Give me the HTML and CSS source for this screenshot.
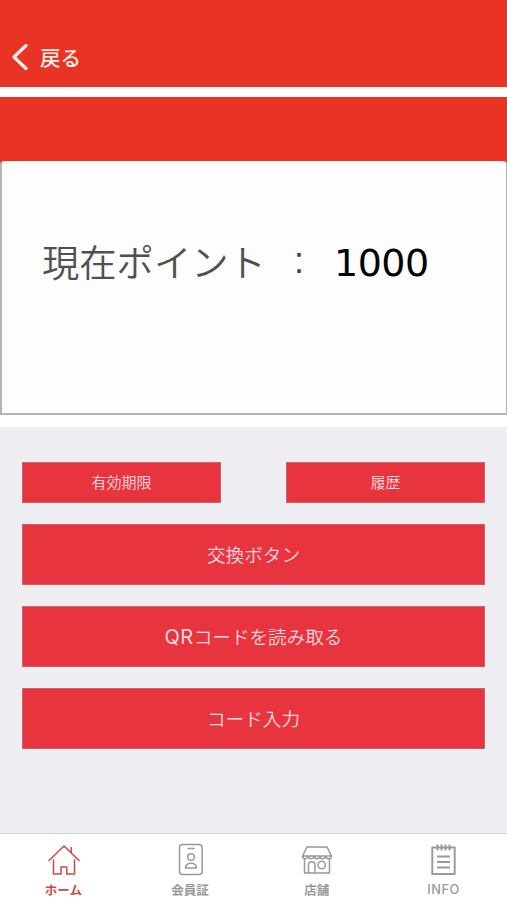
FILE: index.html
```html
<!DOCTYPE html>
<html lang="ja">
<head>
<meta charset="utf-8">
<title>ポイント</title>
<link rel="stylesheet" href="styles.css">
</head>
<body>
<div class="app">
  <header class="header">
    <a class="back">
      <svg class="back-icon" width="17" height="28" viewBox="0 0 17 28"><path d="M15 2.500 3 14 15 25.500"/></svg>
      <span>戻る</span>
    </a>
  </header>
  <section class="points">
    <div class="banner"></div>
    <div class="card">
      <span class="label">現在ポイント</span>
      <span class="colon">:</span>
      <span class="value">1000</span>
    </div>
  </section>
  <main class="actions">
    <div class="row">
      <button class="btn small">有効期限</button>
      <button class="btn small">履歴</button>
    </div>
    <button class="btn">交換ボタン</button>
    <button class="btn"><span class="qr">QR</span>コードを読み取る</button>
    <button class="btn">コード入力</button>
  </main>
  <nav class="tabs">
    <a class="tab active">
      <svg width="34" height="34" viewBox="0 0 34 34"><path d="M3 17.500 18 3l15 14.500M25.200 10V4.500M7.500 17v14H15v-7h5.800v7H28.500V17"/></svg>
      <span>ホーム</span>
    </a>
    <a class="tab">
      <svg width="34" height="34" viewBox="0 0 34 34"><rect x="6.500" y="1.500" width="22.600" height="30" rx="3"/><path d="M15 5.500h6M12.500 25c0-6.500 11-6.500 11 0z"/><circle cx="18" cy="14" r="3.300"/></svg>
      <span>会員証</span>
    </a>
    <a class="tab">
      <svg width="34" height="34" viewBox="0 0 34 34"><path d="M7 4h20l4.500 9H2.500zM2.500 13c0 3.500 5.800 3.500 5.800 0 0 3.500 5.800 3.500 5.800 0 0 3.500 5.800 3.500 5.800 0 0 3.500 5.800 3.500 5.800 0 0 3.500 5.800 3.500 5.800 0M4.500 16v14h25V16M8.500 30v-8c0-4.500 6.500-4.500 6.500 0v8"/><circle cx="21.700" cy="22" r="3.700"/></svg>
      <span>店舗</span>
    </a>
    <a class="tab">
      <svg width="34" height="34" viewBox="0 0 34 34"><path class="bold" d="M5.300 4.500h22.400v26.500H5.300zM10.500 1.500v6M14.500 1.500v6M18.500 1.500v6M22.500 1.500v6M10 13.500h13M10 19h13M10 24.500h13"/></svg>
      <span class="latin">INFO</span>
    </a>
  </nav>
</div>
</body>
</html>
```
FILE: styles.css
```css
* {
  box-sizing: border-box;
}

body {
  margin: 0;
  font-family: "Noto Sans CJK JP", sans-serif;
}

.app {
  height: 900px;
  display: flex;
  flex-direction: column;
  background: #fff;
  overflow: hidden;
}

.header {
  height: 87px;
  padding: 28px 0 2px 11px;
  background: #e93425;
  display: flex;
  align-items: center;
}

.back {
  display: flex;
  align-items: center;
  gap: 12px;
  color: #fff0e8;
  font-size: 20.500px;
  font-weight: 500;
  line-height: 28px;
}

.back-icon path {
  fill: none;
  stroke: #fff0e8;
  stroke-width: 3.200;
  stroke-linecap: round;
  stroke-linejoin: round;
}

.points {
  margin-top: 10px;
  background: linear-gradient(#e93425 67px, #fff 67px);
}

.banner {
  height: 64px;
}

.card {
  height: 254px;
  padding: 0 0 50px 40px;
  display: flex;
  align-items: center;
  background: #fdfdfd;
  border: solid #b4b4b6;
  border-width: 0 1px 2px 2px;
  border-radius: 4px 4px 0 0;
  line-height: 56px;
}

.label {
  width: 243px;
  font-size: 37.300px;
  font-weight: 350;
  color: #505050;
  margin-top: -2px;
}

.colon {
  width: 49px;
  padding-left: 9px;
  font-family: "Liberation Sans", sans-serif;
  font-size: 36px;
  margin-top: -3px;
  color: #444;
}

.value {
  font-family: "DejaVu Sans", sans-serif;
  font-size: 38px;
  letter-spacing: -0.500px;
  margin-top: 2px;
  color: #000;
}

.actions {
  flex: 1;
  margin-top: 12px;
  padding: 35px 22px 0;
  background: #eeedf2;
  display: flex;
  flex-direction: column;
  gap: 21px;
}

.row {
  display: flex;
  justify-content: space-between;
}

.btn {
  height: 61px;
  padding: 0 0 2px;
  border: 1px solid #c9626c;
  background: #e8343e;
  color: #ffd9dc;
  font-family: "Noto Sans CJK JP", sans-serif;
  font-size: 18.600px;
  font-weight: 350;
}

.small {
  width: 199px;
  height: 41px;
  font-size: 15px;
}

.qr {
  font-family: Inter, sans-serif;
  font-size: 20px;
  font-weight: 400;
  letter-spacing: 0.500px;
}

.tabs {
  height: 67px;
  border-top: 1px solid #cfcfd2;
  background: #fff;
  display: flex;
}

.tab {
  flex: 1;
  padding-top: 9px;
  display: flex;
  flex-direction: column;
  align-items: center;
  color: #999;
  font-size: 12.500px;
  font-weight: 700;
  line-height: 26px;
}

.tab svg {
  flex: none;
  fill: none;
  stroke: currentColor;
  stroke-width: 1.500;
  stroke-linecap: round;
  stroke-linejoin: round;
}

.tab .bold {
  stroke-width: 1.900;
  stroke-linecap: butt;
  stroke-linejoin: miter;
}

.active {
  color: #d14841;
}

.latin {
  font-family: Inter, sans-serif;
  font-weight: 500;
  font-size: 12.800px;
  letter-spacing: 0.500px;
}
```
